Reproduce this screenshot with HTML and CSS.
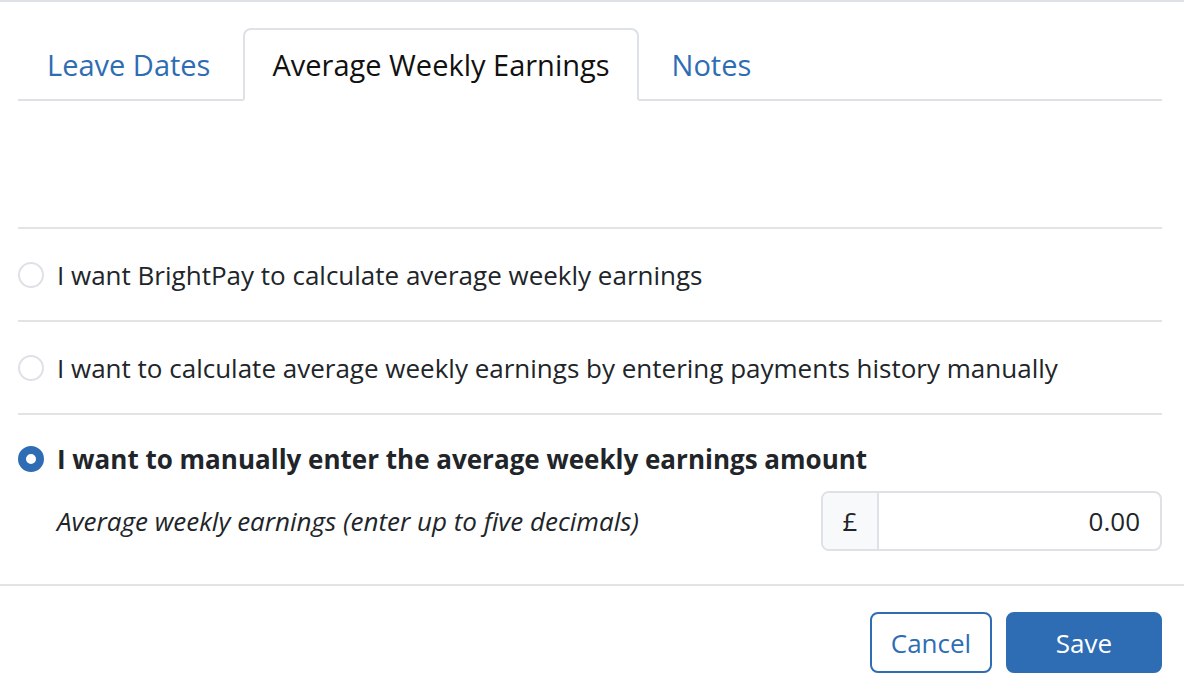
FILE: index.html
```html
<!DOCTYPE html>
<html lang="en">
<head>
  <meta charset="UTF-8" />
  <title>Average Weekly Earnings</title>
  <link rel="stylesheet" href="styles.css">
</head>
<body>
  <div class="dialog">
    <div class="dialog-body">
      <ul class="tabs">
        <li class="tab">Leave Dates</li>
        <li class="tab active">Average Weekly Earnings</li>
        <li class="tab">Notes</li>
      </ul>

      <div class="tab-space"></div>

      <div class="options">
        <label class="option">
          <span class="radio"></span>
          <span>I want BrightPay to calculate average weekly earnings</span>
        </label>
        <label class="option">
          <span class="radio"></span>
          <span>I want to calculate average weekly earnings by entering payments history manually</span>
        </label>
        <div class="option selected">
          <label class="option-head">
            <span class="radio checked"></span>
            <span>I want to manually enter the average weekly earnings amount</span>
          </label>
          <div class="amount-row">
            <span class="amount-label">Average weekly earnings (enter up to five decimals)</span>
            <div class="input-group">
              <span class="prefix">£</span>
              <span class="value">0.00</span>
            </div>
          </div>
        </div>
      </div>
    </div>

    <div class="dialog-footer">
      <button class="btn btn-outline">Cancel</button>
      <button class="btn btn-primary">Save</button>
    </div>
  </div>
</body>
</html>
```

FILE: styles.css
```css
* {
  box-sizing: border-box;
}

html, body {
  margin: 0;
  padding: 0;
  background: #fff;
  color: #212529;
  font-family: "Open Sans", sans-serif;
}

.dialog {
  border-top: 2px solid #dee2e6;
  height: 692px;
}

.dialog-body {
  padding: 0 22px 0 18px;
}

.tabs {
  display: flex;
  gap: 4px;
  list-style: none;
  margin: 26px 0 0 0;
  padding: 0;
  border-bottom: 2px solid #dee2e6;
}

.tab {
  font-size: 29px;
  line-height: 38px;
  padding: 16px 27px 15px;
  color: #2e6db4;
  border: 2px solid transparent;
  border-bottom: none;
  border-radius: 8px 8px 0 0;
  margin-bottom: -2px;
}

.tab.active {
  color: #111;
  background: #fff;
  border-color: #dee2e6;
  border-bottom: 2px solid #fff;
}

.tab-space {
  height: 126px;
}

.options {
  font-size: 26px;
}

.option {
  display: flex;
  align-items: center;
  gap: 13px;
  border-top: 2px solid #e2e3e5;
  padding: 29px 0 28px;
  line-height: 34px;
}

.option.selected {
  display: block;
  padding: 27px 0 33px;
}

.option-head {
  display: flex;
  align-items: center;
  gap: 13px;
  font-weight: 700;
}

.radio {
  width: 26px;
  height: 26px;
  border-radius: 50%;
  border: 2px solid #dee2e6;
  flex-shrink: 0;
}

.radio.checked {
  border: 8px solid #2e6db4;
}

.amount-row {
  display: flex;
  align-items: center;
  justify-content: space-between;
  margin-top: 15px;
  padding-left: 39px;
}

.amount-label {
  font-style: italic;
}

.input-group {
  display: flex;
  width: 341px;
  height: 60px;
  border: 2px solid #dee2e6;
  border-radius: 8px;
  overflow: hidden;
}

.prefix {
  width: 56px;
  background: #f8f9fa;
  border-right: 2px solid #dee2e6;
  display: flex;
  align-items: center;
  justify-content: center;
}

.value {
  flex: 1;
  display: flex;
  align-items: center;
  justify-content: flex-end;
  padding-right: 20px;
}

.dialog-footer {
  border-top: 2px solid #e2e3e5;
  display: flex;
  justify-content: flex-end;
  gap: 14px;
  padding: 26px 22px 0 0;
}

.btn {
  font-family: "Open Sans", sans-serif;
  font-size: 26px;
  height: 61px;
  border-radius: 8px;
  cursor: pointer;
}

.btn-outline {
  width: 122px;
  background: #fff;
  color: #2e6db4;
  border: 2px solid #2e6db4;
}

.btn-primary {
  width: 156px;
  background: #2e6db4;
  color: #fff;
  border: 2px solid #2e6db4;
}
```
